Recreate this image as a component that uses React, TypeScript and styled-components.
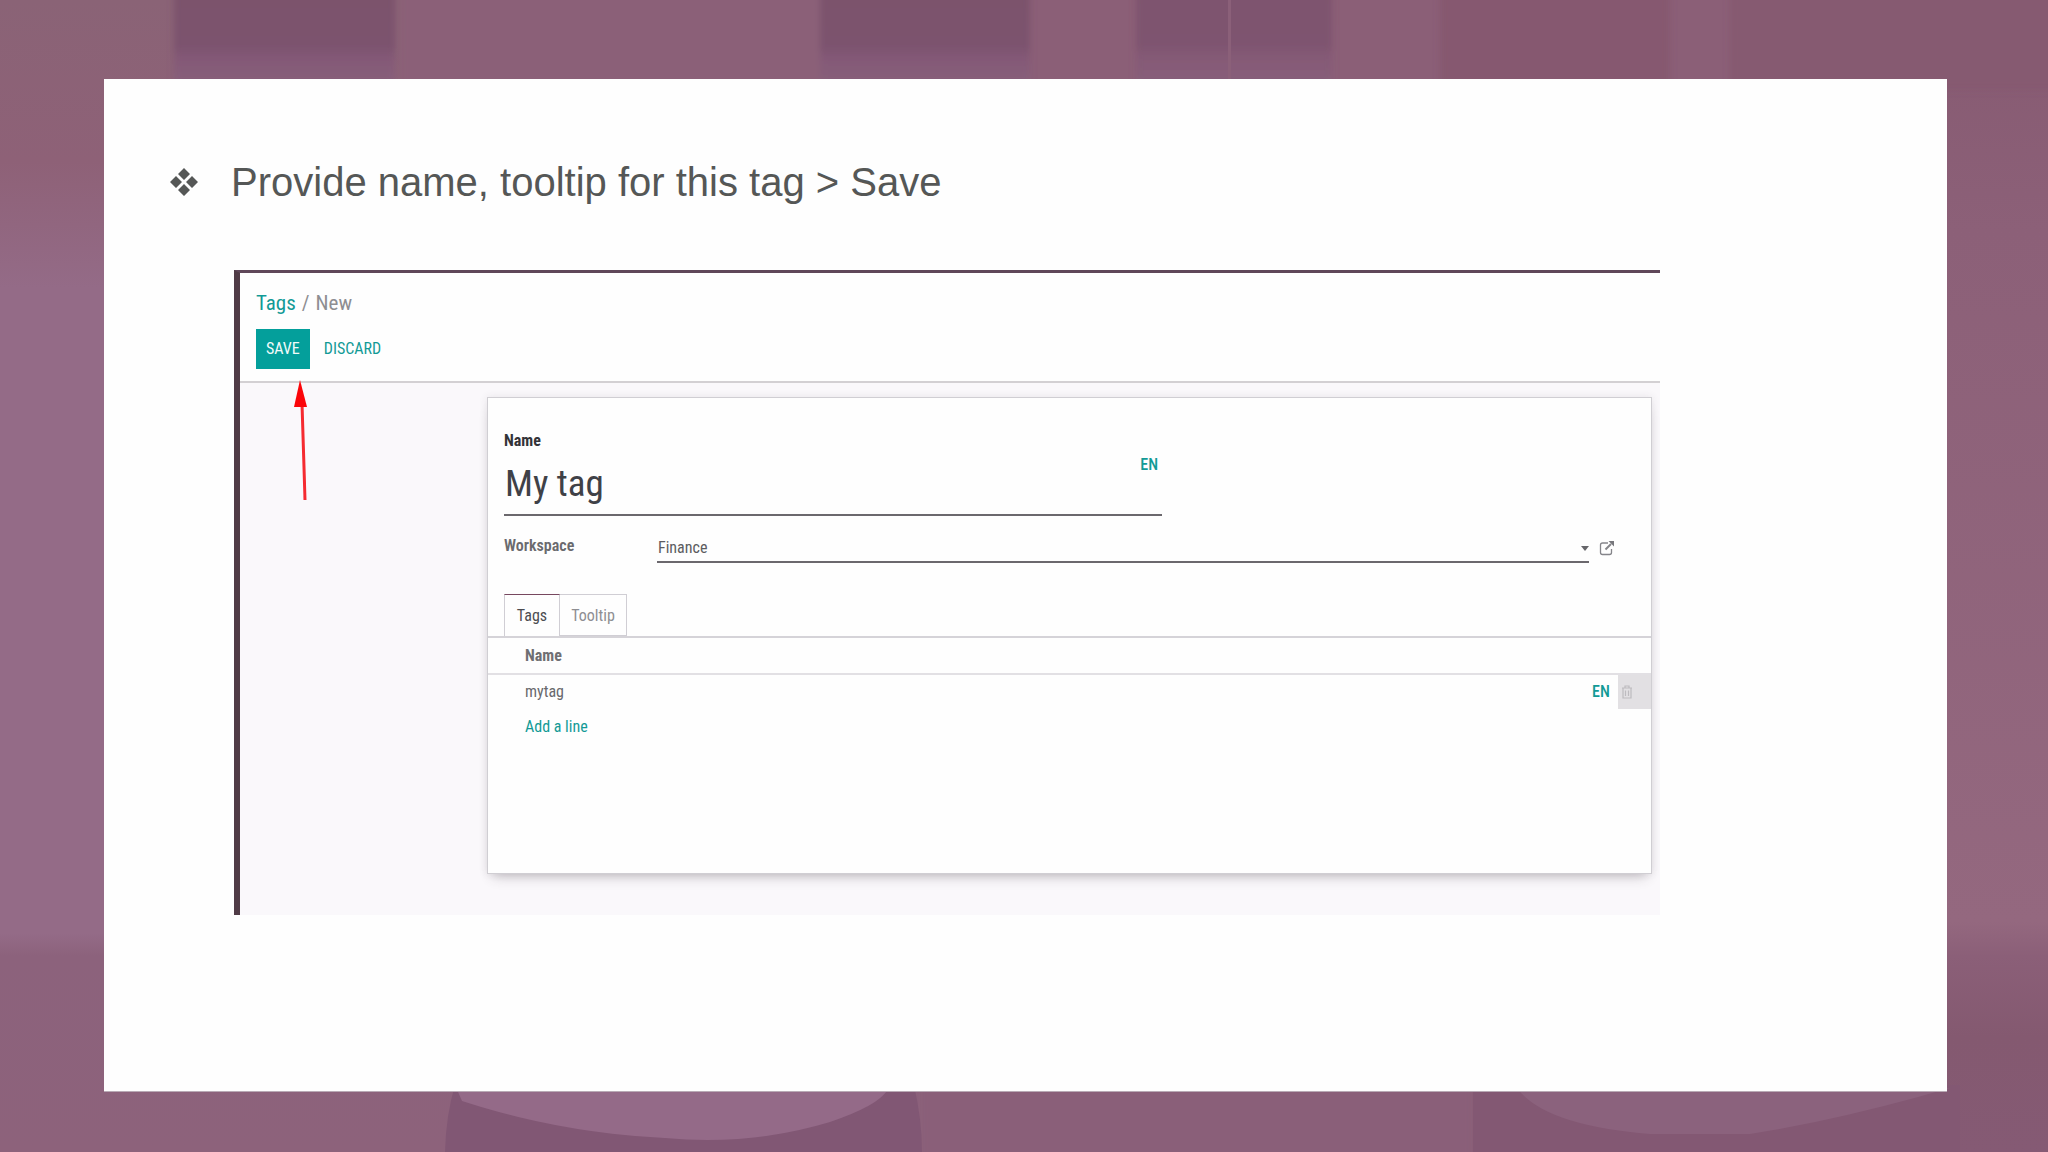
import React from 'react';
import styled, { createGlobalStyle } from 'styled-components';

const GlobalStyle = createGlobalStyle`
  *, *::before, *::after { box-sizing: border-box; }
  body {
    margin: 0;
    background: #8b5f79;
    font-family: "Roboto Condensed", Roboto, "Liberation Sans", sans-serif;
  }
  button, input, select { font: inherit; color: inherit; }
`;

const teal = '#129a96';

const Page = styled.div`
  position: relative;
  display: flex;
  min-height: 100vh;
  padding: 79px 101px 60px 104px;
`;

const BackdropArt = styled.svg`
  position: absolute;
  inset: 0;
  width: 100%;
  height: 100%;
`;

const Slide = styled.main`
  position: relative;
  flex: 1;
  min-width: 0;
  padding: 78px 287px 40px 65px;
  background: #fefefe;
  border-bottom: 1px solid #b9aab5;
`;

const Bullet = styled.h1`
  display: flex;
  align-items: center;
  gap: 32px;
  margin: 0;
  color: #555756;
  font: 400 40px/50px "Liberation Sans", Arial, sans-serif;
`;

const Capture = styled.section`
  position: relative;
  display: flex;
  flex-direction: column;
  margin: 63px 0 0 65px;
  min-height: 645px;
  border-top: 3px solid #5f4759;
  border-left: 6px solid #503b46;
  background: #faf8fb;
`;

const ControlPanel = styled.header`
  padding: 15px 16px 12px;
  background: #fefefe;
  border-bottom: 2px solid #d3d0d3;
`;

const Breadcrumb = styled.nav`
  display: flex;
  gap: 6px;
  color: #8e8e92;
  font-size: 21px;
  line-height: 30px;

  a { color: ${teal}; text-decoration: none; }
`;

const Actions = styled.div`
  display: flex;
  margin-top: 11px;
`;

const Button = styled.button<{ $primary?: boolean }>`
  height: 40px;
  padding: 0 ${(p) => (p.$primary ? 10 : 14)}px;
  border: 0;
  background: ${(p) => (p.$primary ? '#049f9b' : 'transparent')};
  color: ${(p) => (p.$primary ? '#f2fbfa' : teal)};
  font-size: 16px;
  line-height: 20px;
`;

const Arrow = styled.svg`
  position: absolute;
  left: 53px;
  top: 106px;
  width: 20px;
  height: 124px;
`;

const Sheet = styled.form`
  flex: 1;
  margin: 14px 8px 41px 247px;
  padding-top: 32px;
  border: 1px solid #d0ced3;
  background: #fefefe;
  box-shadow: 0 8px 12px -6px rgba(60, 50, 60, 0.3), 0 0 8px rgba(60, 50, 60, 0.1);
`;

const Fields = styled.div`
  padding: 0 36px 0 16px;
`;

const NameLabel = styled.label`
  display: block;
  color: #333338;
  font-size: 16px;
  font-weight: 700;
  line-height: 22px;
`;

const NameRow = styled.div`
  display: flex;
  width: 60%;
  max-width: 658px;
  height: 64px;
  padding: 2px 4px 0 1px;
  border-bottom: 2px solid #6b686d;
`;

const NameInput = styled.input`
  flex: 1;
  min-width: 0;
  height: 60px;
  padding: 0;
  border: 0;
  background: transparent;
  color: #3f4147;
  font-size: 37px;
  line-height: 60px;
`;

const Lang = styled.button`
  align-self: flex-start;
  padding: 0;
  border: 0;
  background: transparent;
  color: ${teal};
  font-size: 16px;
  font-weight: 500;
  line-height: 22px;
`;

const WorkspaceRow = styled.div`
  display: flex;
  align-items: flex-start;
  margin-top: 18px;
`;

const FieldLabel = styled.label`
  width: 153px;
  color: #6a6a6e;
  font-size: 16px;
  font-weight: 600;
  line-height: 24px;
`;

const SelectBox = styled.div`
  display: flex;
  flex: 1;
  align-items: center;
  height: 29px;
  border-bottom: 2px solid #6b686d;
`;

const Select = styled.select`
  flex: 1;
  height: 27px;
  padding: 0 0 0 1px;
  border: 0;
  appearance: none;
  background: transparent;
  color: #5c5c60;
  font-size: 16px;
  line-height: 27px;
`;

const IconButton = styled.button`
  display: flex;
  padding: 0;
  border: 0;
  background: transparent;
`;

const OpenRecord = styled(IconButton)`
  margin: 6px 0 0 10px;
`;

const Tabs = styled.div`
  display: flex;
  height: 44px;
  margin-top: 31px;
  padding-left: 16px;
  border-bottom: 2px solid #d5d3d8;
`;

const Tab = styled.button<{ $active?: boolean }>`
  width: ${(p) => (p.$active ? 56 : 67)}px;
  padding: 0;
  border: 1px solid #d0ced4;
  border-top-color: ${(p) => (p.$active ? '#77485f' : '#d0ced4')};
  border-left-width: ${(p) => (p.$active ? 1 : 0)}px;
  border-bottom: ${(p) => (p.$active ? '0' : '1px solid #d0ced4')};
  background: transparent;
  color: ${(p) => (p.$active ? '#4c4c51' : '#8e8e92')};
  font-size: 16px;
`;

const Lines = styled.table`
  width: 100%;
  border-collapse: collapse;
  color: #68686c;
  font-size: 16px;
  line-height: 20px;

  th, td { padding: 0 0 0 37px; text-align: left; }
  th { height: 36px; border-bottom: 2px solid #e2e0e4; color: #6f6f73; font-weight: 700; }
  td { height: 35px; }
  th + th, td + td { padding: 0; }
`;

const LangCell = styled.td`
  width: 26px;
`;

const TrashCell = styled.td`
  width: 33px;
  background: #e2e0e3;

  button { margin-left: 3px; }
`;

const AddLine = styled.a`
  display: inline-block;
  color: ${teal};
  text-decoration: none;
`;

const Backdrop = () => (
  <BackdropArt viewBox="0 0 2048 1152" preserveAspectRatio="none" aria-hidden="true">
    <defs>
      <linearGradient id="leftWall" x1="0" y1="0" x2="0" y2="1">
        <stop offset="0" stopColor="#8a6376" />
        <stop offset="0.14" stopColor="#8e6177" />
        <stop offset="0.25" stopColor="#946b87" />
        <stop offset="0.81" stopColor="#946b87" />
        <stop offset="0.83" stopColor="#8c627c" />
        <stop offset="1" stopColor="#8d627b" />
      </linearGradient>
      <linearGradient id="rightWall" x1="0" y1="0" x2="0" y2="1">
        <stop offset="0" stopColor="#865a71" />
        <stop offset="0.2" stopColor="#8c6078" />
        <stop offset="0.8" stopColor="#94687f" />
        <stop offset="0.83" stopColor="#8b5f78" />
        <stop offset="0.9" stopColor="#845970" />
        <stop offset="1" stopColor="#855a74" />
      </linearGradient>
      <linearGradient id="shade" x1="0" y1="0" x2="0" y2="1">
        <stop offset="0" stopColor="#7b526c" />
        <stop offset="0.58" stopColor="#7b526e" />
        <stop offset="0.72" stopColor="#845977" />
        <stop offset="1" stopColor="#87607b" />
      </linearGradient>
      <filter id="soft" x="-5%" y="-20%" width="110%" height="140%">
        <feGaussianBlur stdDeviation="3" />
      </filter>
    </defs>
    <rect width="2048" height="1152" fill="#8b5f77" />
    <rect width="1024" height="1152" fill="url(#leftWall)" />
    <rect x="1850" width="198" height="1152" fill="url(#rightWall)" />
    <g filter="url(#soft)">
      <rect x="400" y="-20" width="420" height="110" fill="#8b6078" />
      <rect x="174" y="-10" width="221" height="95" fill="url(#shade)" />
      <rect x="820" y="-10" width="210" height="95" fill="url(#shade)" />
      <rect x="1136" y="-10" width="196" height="95" fill="url(#shade)" opacity="0.8" />
      <rect x="1440" y="-10" width="230" height="100" fill="#86596f" />
      <rect x="1730" y="-10" width="340" height="100" fill="#865a71" />
      <rect x="920" y="1080" width="553" height="90" fill="#8a5f79" />
    </g>
    <rect x="1228" width="3" height="79" fill="#8b6079" />
    <path d="M455 1085H914Q922 1120 922 1152H445Q446 1115 455 1085Z" fill="#815774" />
    <path d="M455 1085L462 1101Q560 1133 665 1138Q750 1146 830 1122Q884 1104 890 1085Z" fill="#946a88" />
    <path d="M1473 1085H1960V1152H1473Z" fill="#835873" />
    <path d="M1515 1085Q1540 1125 1650 1134H1750Q1840 1120 1950 1088Z" fill="#8b627d" />
  </BackdropArt>
);

export default function App() {
  return (
    <>
      <GlobalStyle />
      <Page>
        <Backdrop />
        <Slide>
          <Bullet>
            <svg width="30" height="30" viewBox="0 0 30 30" fill="#555756" aria-hidden="true">
              <path d="M15 1l6 6-6 6-6-6zM15 17l6 6-6 6-6-6zM7 9l6 6-6 6-6-6zM23 9l6 6-6 6-6-6z" />
            </svg>
            Provide name, tooltip for this tag &gt; Save
          </Bullet>
          <Capture>
            <ControlPanel>
              <Breadcrumb aria-label="Breadcrumb">
                <a href="#tags">Tags</a>
                <span>/</span>
                <span>New</span>
              </Breadcrumb>
              <Actions>
                <Button type="button" $primary>SAVE</Button>
                <Button type="button">DISCARD</Button>
              </Actions>
            </ControlPanel>
            <Sheet>
              <Fields>
                <NameLabel htmlFor="tag-name">Name</NameLabel>
                <NameRow>
                  <NameInput id="tag-name" defaultValue="My tag" />
                  <Lang type="button">EN</Lang>
                </NameRow>
                <WorkspaceRow>
                  <FieldLabel htmlFor="workspace">Workspace</FieldLabel>
                  <SelectBox>
                    <Select id="workspace" defaultValue="Finance">
                      <option>Finance</option>
                    </Select>
                    <svg width="8" height="6" viewBox="0 0 8 6" aria-hidden="true">
                      <path d="M0 1h8L4 6z" fill="#66666a" />
                    </svg>
                  </SelectBox>
                  <OpenRecord type="button" aria-label="Open workspace">
                    <svg width="16" height="16" viewBox="0 0 16 16" fill="none" stroke="#85858a" strokeWidth="1.3">
                      <path d="M9 3H3.500Q1.500 3 1.500 5V12.500Q1.500 14.500 3.500 14.500H10.500Q12.500 14.500 12.500 12.500V9" />
                      <path d="M6.500 9.500L12 4" strokeWidth="2" />
                      <path d="M9.500 1H15V6.500z" fill="#77777c" stroke="none" />
                    </svg>
                  </OpenRecord>
                </WorkspaceRow>
              </Fields>
              <Tabs role="tablist">
                <Tab type="button" role="tab" aria-selected="true" $active>Tags</Tab>
                <Tab type="button" role="tab" aria-selected="false">Tooltip</Tab>
              </Tabs>
              <Lines>
                <thead>
                  <tr>
                    <th colSpan={3}>Name</th>
                  </tr>
                </thead>
                <tbody>
                  <tr>
                    <td>mytag</td>
                    <LangCell><Lang type="button">EN</Lang></LangCell>
                    <TrashCell>
                      <IconButton type="button" aria-label="Delete line">
                        <svg width="12" height="16" viewBox="0 0 12 16" fill="none" stroke="#bdbbbf" strokeWidth="1.2">
                          <path d="M1 4H11M4 4V2H8V4M2 4V14H10V4M4.500 6.500V12M7.500 6.500V12" />
                        </svg>
                      </IconButton>
                    </TrashCell>
                  </tr>
                  <tr>
                    <td colSpan={3}><AddLine href="#add">Add a line</AddLine></td>
                  </tr>
                </tbody>
              </Lines>
            </Sheet>
            <Arrow viewBox="0 0 20 124" aria-hidden="true">
              <path d="M9 24L12 121" stroke="#f52a30" strokeWidth="3" />
              <path d="M7 1L14 28H1z" fill="#fb0509" />
            </Arrow>
          </Capture>
        </Slide>
      </Page>
    </>
  );
}
